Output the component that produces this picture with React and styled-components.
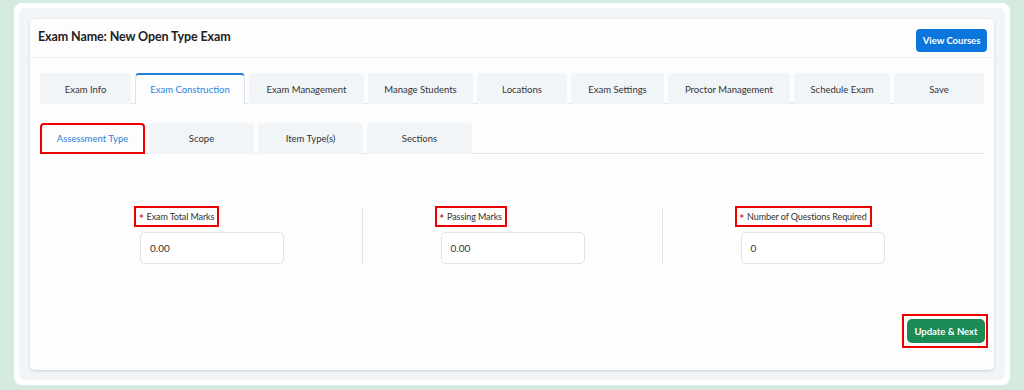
import React from "react";
import styled, { createGlobalStyle } from "styled-components";

const Global = createGlobalStyle`
  html, body { margin: 0; padding: 0; background: #d6ebe0; }
  body { font-family: "Lato", "Noto Sans", sans-serif; color: #2b2b2b; }
  * { box-sizing: border-box; }
`;

const Outer = styled.div`
  margin: 3px 14px 5px;
  background: #ffffff;
  border-radius: 8px;
  padding: 5px;
`;

const Panel = styled.div`
  background: #f1f5f8;
  border-radius: 6px;
  padding: 11px 11px 10px;
`;

const Card = styled.div`
  background: #fdfdfd;
  border-radius: 5px;
  box-shadow: 0 1px 3px rgba(0, 0, 0, 0.14);
`;

const Header = styled.div`
  height: 39px;
  display: flex;
  align-items: center;
  justify-content: space-between;
  padding: 0 7px 0 8px;
  border-bottom: 1px solid #eceef1;
`;

const Title = styled.h1`
  margin: 0 0 3px;
  font-size: 12.5px;
  letter-spacing: -0.1px;
  font-weight: 700;
  color: #222;
`;

const BlueButton = styled.button`
  margin-top: 4px;
  width: 71px;
  height: 23px;
  border: none;
  border-radius: 4px;
  background: #0b76dc;
  color: #fff;
  font-family: inherit;
  font-size: 9.5px;
  font-weight: 700;
  padding: 0;
`;

const Body = styled.div`
  padding: 15px 10px 22px;
`;

const TabRow = styled.div`
  display: flex;
  gap: 4px;
  height: 31px;
  border-bottom: 1px solid #e1e5ea;
`;

const Tab = styled.div`
  width: ${(p) => p.$w}px;
  height: 31px;
  display: flex;
  align-items: center;
  justify-content: center;
  border-radius: 4px 4px 0 0;
  font-size: 9.5px;
  background: ${(p) => (p.$active ? "#fdfdfd" : "#f2f5f8")};
  color: ${(p) => (p.$active ? "#2a83d9" : "#333")};
  border: 1px solid ${(p) => (p.$active ? "#dde2e8" : "transparent")};
  border-top: 2px solid ${(p) => (p.$active ? "#1f7fd9" : "transparent")};
  border-bottom: none;
`;

const SubTabRow = styled(TabRow)`
  margin-top: 19px;
`;

const SubTab = styled.div`
  width: 105px;
  height: 31px;
  display: flex;
  align-items: center;
  justify-content: center;
  border-radius: 4px 4px 0 0;
  font-size: 9.5px;
  background: ${(p) => (p.$active ? "#fdfdfd" : "#f2f5f8")};
  color: ${(p) => (p.$active ? "#2a83d9" : "#333")};
  border: ${(p) => (p.$active ? "2px solid #ee0000" : "none")};
`;

const FieldRow = styled.div`
  margin-top: 54px;
  display: flex;
  justify-content: center;
`;

const Column = styled.div`
  width: 300px;
  display: flex;
  justify-content: center;
  border-left: ${(p) => (p.$divider ? "1px solid #e3e6ea" : "none")};
`;

const Field = styled.div`
  width: 144px;
  display: flex;
  flex-direction: column;
  align-items: flex-start;
`;

const Label = styled.label`
  margin-left: -4px;
  padding: 2px 3px;
  height: 17px;
  display: inline-flex;
  align-items: center;
  gap: 3px;
  font-size: 9px;
  letter-spacing: -0.1px;
  color: #333;
  outline: 2px solid #ee0000;
`;

const Star = styled.span`
  color: #e32222;
  font-size: 11px;
  font-weight: 700;
  line-height: 1;
  margin-top: 3px;
`;

const Input = styled.div`
  margin-top: 7px;
  width: 144px;
  height: 32px;
  border: 1px solid #e0e4e9;
  border-radius: 5px;
  background: #fff;
  display: flex;
  align-items: center;
  padding: 0 9px;
  font-size: 10px;
  color: #333;
`;

const Footer = styled.div`
  margin-top: 50px;
  display: flex;
  justify-content: flex-end;
  margin-right: -4px;
`;

const Highlight = styled.div`
  border: 2px solid #ee0000;
  padding: 3px 1px 3px 3px;
`;

const GreenButton = styled.button`
  display: block;
  width: 78px;
  height: 24px;
  border: none;
  border-radius: 5px;
  background: #1b8a55;
  color: #fff;
  font-family: inherit;
  font-size: 9.5px;
  font-weight: 700;
  padding: 0;
`;

const tabs = [
  ["Exam Info", 91],
  ["Exam Construction", 110, true],
  ["Exam Management", 115],
  ["Manage Students", 105],
  ["Locations", 90],
  ["Exam Settings", 93],
  ["Proctor Management", 122],
  ["Schedule Exam", 96],
  ["Save", 90],
];

const subTabs = ["Assessment Type", "Scope", "Item Type(s)", "Sections"];

const fields = [
  ["Exam Total Marks", "0.00"],
  ["Passing Marks", "0.00"],
  ["Number of Questions Required", "0"],
];

export default function App() {
  return (
    <>
      <Global />
      <Outer>
        <Panel>
          <Card>
            <Header>
              <Title>Exam Name: New Open Type Exam</Title>
              <BlueButton>View Courses</BlueButton>
            </Header>
            <Body>
              <TabRow>
                {tabs.map(([t, w, a]) => (
                  <Tab key={t} $w={w} $active={a}>
                    {t}
                  </Tab>
                ))}
              </TabRow>
              <SubTabRow>
                {subTabs.map((t, i) => (
                  <SubTab key={t} $active={i === 0}>
                    {t}
                  </SubTab>
                ))}
              </SubTabRow>
              <FieldRow>
                {fields.map(([l, v], i) => (
                  <Column key={l} $divider={i > 0}>
                    <Field>
                      <Label>
                        <Star>*</Star>
                        {l}
                      </Label>
                      <Input>{v}</Input>
                    </Field>
                  </Column>
                ))}
              </FieldRow>
              <Footer>
                <Highlight>
                  <GreenButton>Update &amp; Next</GreenButton>
                </Highlight>
              </Footer>
            </Body>
          </Card>
        </Panel>
      </Outer>
    </>
  );
}
